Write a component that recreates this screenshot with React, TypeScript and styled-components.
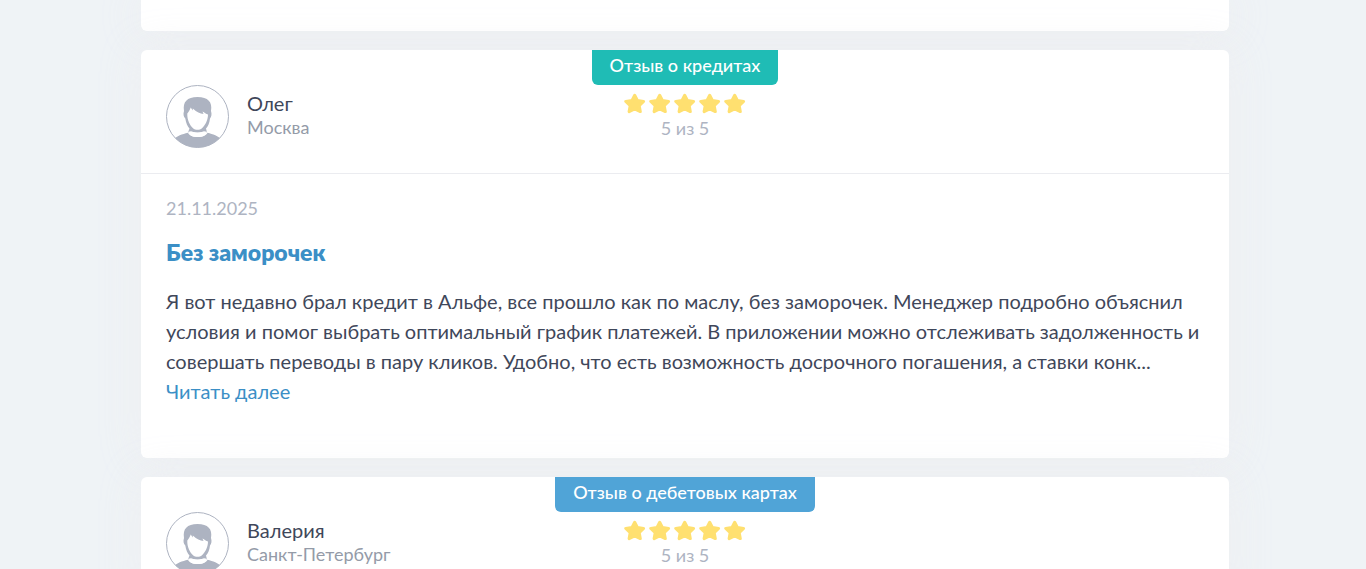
import React from "react";
import styled, { createGlobalStyle } from "styled-components";

const GlobalStyle = createGlobalStyle`
  *, *::before, *::after { box-sizing: border-box; }
  body {
    margin: 0;
    background: #eff3f6;
    color: #3f475a;
    font-family: Lato, "Noto Sans", sans-serif;
    font-size: 20px;
    line-height: 30px;
  }
  h2, p { margin: 0; }
`;

const Page = styled.main`
  display: flex;
  flex-direction: column;
  gap: 19px;
  max-width: 1092px;
  margin: 0 auto;
  padding-left: 4px;
`;

const Card = styled.article`
  background: #fff;
  border-radius: 6px;
  box-shadow: 0 0 40px rgba(238, 237, 240, 0.8);
`;

const CardEnd = styled(Card)`
  padding-bottom: 31px;
  border-top-left-radius: 0;
  border-top-right-radius: 0;
`;

const Header = styled.header<{ $divided?: boolean }>`
  display: grid;
  grid-template-columns: 1fr auto 1fr;
  align-items: start;
  min-height: 124px;
  padding: 0 25px;
  border-bottom: 1px solid ${(p) => (p.$divided ? "#ebecf0" : "transparent")};
`;

const Author = styled.div`
  display: flex;
  align-items: flex-start;
  gap: 18px;
  padding-top: 35px;
`;

const AuthorText = styled.div`
  display: flex;
  flex-direction: column;
  padding-top: 6px;
  line-height: 24px;
`;

const Name = styled.span`
  font-size: 20px;
`;

const City = styled.span`
  font-size: 18px;
  color: #949ba8;
`;

const Rating = styled.div`
  display: flex;
  flex-direction: column;
  align-items: center;
`;

const Badge = styled.span<{ $color: string }>`
  height: 35px;
  padding: 0 18px;
  border-radius: 0 0 6px 6px;
  background: ${(p) => p.$color};
  color: #fff;
  font-size: 18px;
  font-weight: 500;
  line-height: 30px;
`;

const Stars = styled.div`
  display: flex;
  gap: 3px;
  margin-top: 8px;
`;

const Score = styled.span`
  margin-top: 2px;
  color: #aeb4c2;
  font-size: 18px;
  line-height: 24px;
`;

const Body = styled.div`
  padding: 19px 25px 52px;
`;

const PostedOn = styled.time`
  display: block;
  color: #aeb4c2;
  font-size: 18px;
`;

const Title = styled.h2`
  margin: 14px 0 19px;
  color: #3b8fc6;
  font-size: 23px;
  font-weight: 800;
  line-height: 30px;
`;

const ReadMore = styled.a`
  display: block;
  width: max-content;
  color: #3b8fc6;
  text-decoration: none;
`;

const Avatar = ({ id }: { id: string }) => (
  <svg width="63" height="63" viewBox="0 0 63 63" aria-hidden="true">
    <clipPath id={id}>
      <circle cx="31.5" cy="31.5" r="31" />
    </clipPath>
    <g clipPath={`url(#${id})`} fill="#adb3c1">
      <path d="M7 55C11 50.500 16 49.500 22 47.800C24 53.500 39.500 53.500 41.500 47.800C47 49.500 52 50.500 56 55V63H7Z" />
      <path d="M18 26C16.500 17 21 12 31.500 12C42 12 46.500 17 45 26C46 29 45.500 32 44 33.500C43.500 38 42 41.500 40 43.500L41 47.500C37 46.500 35 47.500 31.500 47.500C28 47.500 26 46.500 22 47.500L23.500 43.500C21.500 41.500 20 38 19.300 33.500C17.500 32 17 29 18 26Z" />
      <path fill="#fff" d="M21.300 28.500C23 26.500 24 24.500 24.700 22.500L26.800 25.500V23.500C31 27.500 34 28.500 37.500 29L36.500 26.500C38.500 27.500 40 29 42 29.500C42 36 38.500 41 36 43.200C33.500 45.200 29.500 45.200 27 43.200C24 40.500 21 35 21.300 28.500Z" />
      <path fill="#fff" d="M22.500 46.800L25 46.300Q31.500 49 38 46.300L40.800 46.800Q40 52 31.500 52Q23 52 22.500 46.800Z" />
    </g>
    <circle cx="31.5" cy="31.5" r="31" fill="none" stroke="#adb3c1" />
  </svg>
);

const Star = () => (
  <svg width="22" height="21" viewBox="0 0 22 21" aria-hidden="true">
    <path
      d="M10.700 2.300L13.400 7.500L19.600 8.400L15.200 12.600L16.300 18.600L10.700 15.800L5.100 18.600L6.200 12.600L1.800 8.400L8 7.500Z"
      fill="#ffe070"
      stroke="#ffe070"
      strokeWidth="3"
      strokeLinejoin="round"
    />
  </svg>
);

type ReviewProps = {
  id: string;
  name: string;
  city: string;
  topic: string;
  color: string;
  children?: React.ReactNode;
};

const Review = ({ id, name, city, topic, color, children }: ReviewProps) => (
  <Card>
    <Header $divided={Boolean(children)}>
      <Author>
        <Avatar id={id} />
        <AuthorText>
          <Name>{name}</Name>
          <City>{city}</City>
        </AuthorText>
      </Author>
      <Rating>
        <Badge $color={color}>{topic}</Badge>
        <Stars>
          {[1, 2, 3, 4, 5].map((n) => (
            <Star key={n} />
          ))}
        </Stars>
        <Score>5 из 5</Score>
      </Rating>
    </Header>
    {children && <Body>{children}</Body>}
  </Card>
);

export default function App() {
  return (
    <>
      <GlobalStyle />
      <Page>
        <CardEnd />
        <Review id="oleg" name="Олег" city="Москва" topic="Отзыв о кредитах" color="#1fbcb5">
          <PostedOn dateTime="2025-11-21">21.11.2025</PostedOn>
          <Title>Без заморочек</Title>
          <p>
            Я вот недавно брал кредит в Альфе, все прошло как по маслу, без заморочек. Менеджер
            подробно объяснил условия и помог выбрать оптимальный график платежей. В приложении
            можно отслеживать задолженность и совершать переводы в пару кликов. Удобно, что есть
            возможность досрочного погашения, а ставки конк...
          </p>
          <ReadMore href="#review">Читать далее</ReadMore>
        </Review>
        <Review
          id="valeria"
          name="Валерия"
          city="Санкт-Петербург"
          topic="Отзыв о дебетовых картах"
          color="#50a4d7"
        />
      </Page>
    </>
  );
}
